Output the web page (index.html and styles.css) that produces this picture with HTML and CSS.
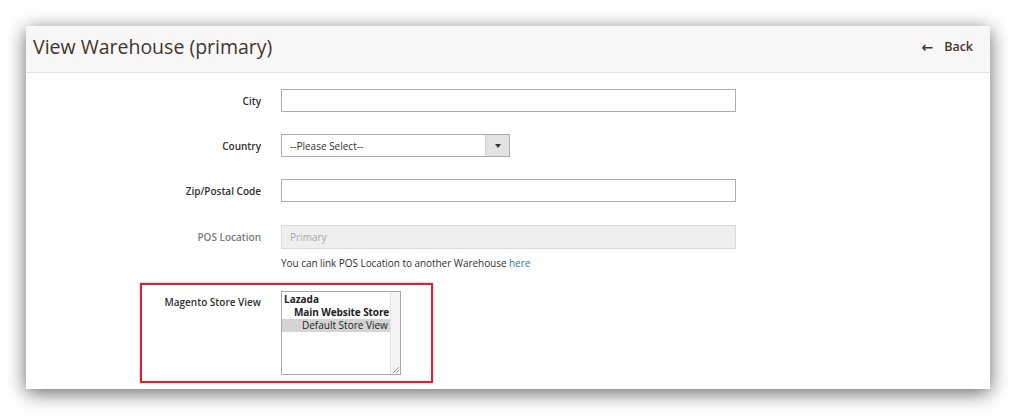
FILE: index.html
```html
<!DOCTYPE html>
<html lang="en">
<head>
<meta charset="utf-8">
<title>View Warehouse (primary)</title>
<link rel="stylesheet" href="styles.css">
</head>
<body>
<div class="panel">
  <header class="page-head">
    <h1 class="page-title">View Warehouse (primary)</h1>
    <a class="back" href="#"><span class="back-arrow">&#8592;</span><span>Back</span></a>
  </header>
  <form class="form">
    <div class="row">
      <label class="label">City</label>
      <div class="control"><input class="input" type="text"></div>
    </div>
    <div class="row">
      <label class="label">Country</label>
      <div class="control">
        <div class="select">
          <span class="select-text">--Please Select--</span>
          <span class="select-btn"><span class="caret"></span></span>
        </div>
      </div>
    </div>
    <div class="row row-zip">
      <label class="label">Zip/Postal Code</label>
      <div class="control"><input class="input" type="text"></div>
    </div>
    <div class="row row-pos">
      <label class="label label-disabled">POS Location</label>
      <div class="control">
        <div class="input input-disabled">Primary</div>
        <p class="note">You can link POS Location to another Warehouse <a href="#">here</a></p>
      </div>
    </div>
    <div class="highlight">
      <label class="label hl-label">Magento Store View</label>
      <div class="multi">
        <div class="multi-list">
          <div class="opt opt-1">Lazada</div>
          <div class="opt opt-2">Main Website Store</div>
          <div class="opt opt-3 selected">Default Store View</div>
        </div>
        <div class="multi-track"></div>
        <svg class="grip" width="8" height="8" viewBox="0 0 8 8"><path d="M7 1L1 7M7 4L4 7" stroke="#888" stroke-width="0.8" fill="none"/></svg>
      </div>
    </div>
  </form>
</div>
</body>
</html>
```

FILE: styles.css
```css
html, body {
  margin: 0;
  padding: 0;
  background: #ffffff;
}
body {
  font-family: "Open Sans", "Liberation Sans", sans-serif;
  color: #303030;
  padding: 26px 26px 0 26px;
  height: 416px;
  box-sizing: border-box;
  overflow: hidden;
}
.panel {
  width: 964px;
  height: 363px;
  background: #ffffff;
  box-shadow: 0 4px 18px rgba(0, 0, 0, 0.6);
  overflow: hidden;
}
.page-head {
  height: 46px;
  box-sizing: content-box;
  background: #f7f7f7;
  border-bottom: 1px solid #e3e3e3;
  display: flex;
  align-items: center;
  justify-content: space-between;
  padding: 0 17px 0 7px;
}
.page-title {
  margin: 0 0 5px 0;
  font-size: 19.5px;
  font-weight: 400;
  color: #41362f;
  line-height: 26px;
}
.back {
  display: flex;
  align-items: center;
  gap: 11px;
  color: #41362f;
  text-decoration: none;
  font-size: 12.5px;
  font-weight: 600;
  margin-bottom: 4px;
  line-height: 16px;
}
.back-arrow {
  font-size: 14px;
  font-weight: 700;
  font-family: "DejaVu Sans", sans-serif;
}
.form {
  padding-top: 16px;
}
.row {
  display: grid;
  grid-template-columns: 235px 455px;
  column-gap: 20px;
  align-items: start;
  margin-bottom: 22px;
}
.row-zip {
  margin-bottom: 23px;
}
.row-pos {
  margin-bottom: 0;
}
.label {
  text-align: right;
  font-size: 10px;
  font-weight: 600;
  line-height: 23px;
  height: 23px;
  padding-top: 1px;
  box-sizing: border-box;
  color: #303030;
}
.label-disabled {
  color: #7a7a7a;
}
.input {
  display: block;
  box-sizing: border-box;
  width: 455px;
  height: 23px;
  margin: 0;
  border: 1px solid #adadad;
  background: #fff;
  font-family: inherit;
  font-size: 10px;
  padding: 0 8px;
}
.input-disabled {
  background: #efefef;
  border-color: #d9d9d9;
  color: #a6a6a6;
  height: 24px;
  line-height: 22px;
}
.select {
  box-sizing: border-box;
  width: 229px;
  height: 23px;
  border: 1px solid #adadad;
  background: #fff;
  display: flex;
  align-items: stretch;
}
.select-text {
  flex: 1;
  font-size: 10px;
  line-height: 22px;
  padding-left: 8px;
  color: #303030;
}
.select-btn {
  width: 23px;
  background: #e3e3e3;
  border-left: 1px solid #d0d0d0;
  display: flex;
  align-items: center;
  justify-content: center;
}
.caret {
  width: 0;
  height: 0;
  border-left: 3px solid transparent;
  border-right: 3px solid transparent;
  border-top: 4px solid #41362f;
}
.note {
  margin: 7px 0 0 0;
  font-size: 10px;
  line-height: 14px;
  color: #303030;
  letter-spacing: -0.05px;
}
.note a {
  color: #1979c3;
  text-decoration: none;
}
.highlight {
  margin: 13px 0 0 114px;
  width: 293px;
  height: 100px;
  box-sizing: border-box;
  border: 2px solid #e3202e;
  box-shadow: 0 0 2px rgba(0, 0, 0, 0.35);
  padding: 6px 0 0 0;
  display: flex;
  gap: 20px;
  align-items: flex-start;
}
.hl-label {
  width: 119px;
  flex: none;
  line-height: 12px;
  height: auto;
  padding-top: 5px;
  font-size: 10px;
}
.multi {
  position: relative;
  width: 120px;
  height: 84px;
  box-sizing: border-box;
  border: 1px solid #a9a9a9;
  display: flex;
  background: #fff;
}
.multi-list {
  flex: 1;
  padding-top: 1px;
}
.multi-track {
  width: 9px;
  background: #f4f4f4;
  border-left: 1px solid #e2e2e2;
}
.opt {
  font-size: 10px;
  font-weight: 700;
  line-height: 13px;
  height: 13px;
  color: #222;
  white-space: nowrap;
}
.opt-1 { padding-left: 2px; }
.opt-2 { padding-left: 12px; letter-spacing: -0.1px; }
.opt-3 { padding-left: 20px; font-weight: 400; color: #222; }
.selected {
  background: #d4d4d4;
}
.grip {
  position: absolute;
  right: 0;
  bottom: 0;
}
```
